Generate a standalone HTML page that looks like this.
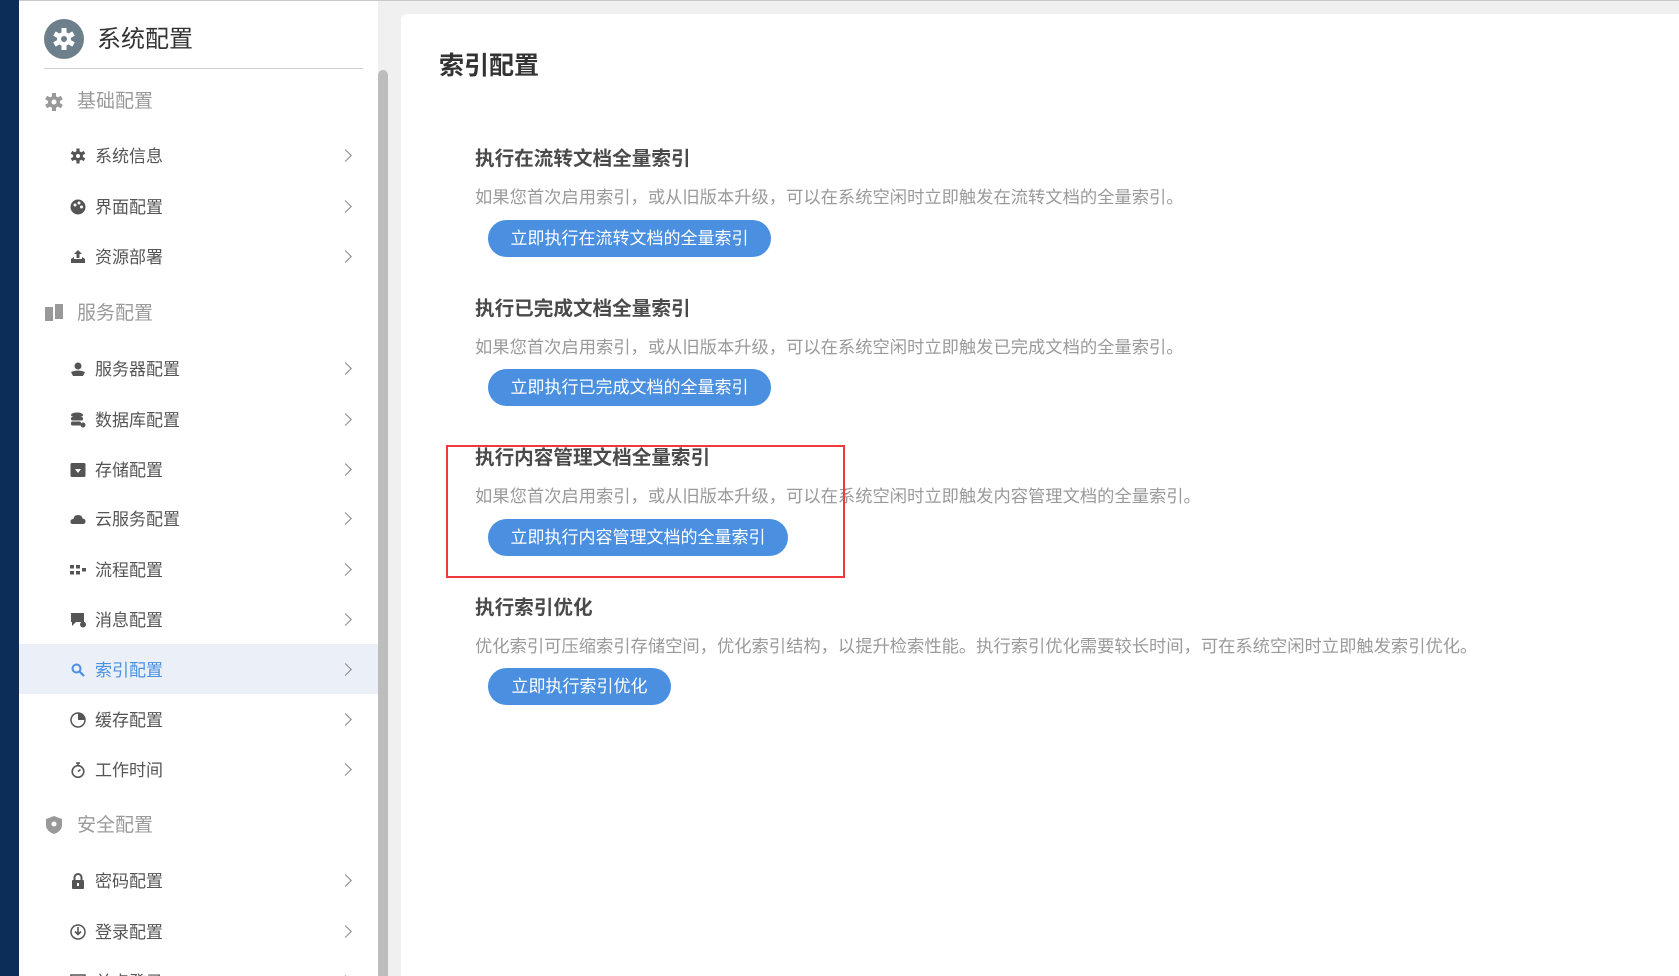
<!DOCTYPE html>
<html style="overflow:hidden;width:1679px;height:976px"><head><meta charset="utf-8"><style>
*{margin:0;padding:0;box-sizing:border-box}
body{width:1679px;height:976px;overflow:hidden;background:#f0f0f0;font-family:"Liberation Sans","Noto Sans CJK SC",sans-serif;position:relative}
.wrap{position:absolute;left:0;top:0;width:1679px;height:976px;overflow:hidden}
.topline{position:absolute;left:0;top:0;width:1679px;height:1px;background:#c8c8c8}
.dark{position:absolute;left:0;top:0;width:19px;height:976px;background:#0b2d57}
.side{position:absolute;left:19px;top:1px;width:359px;height:975px;background:#fff}
.scroll{position:absolute;left:378px;top:70px;width:10px;height:906px;background:#bdbdbd;border-radius:5px 5px 0 0}
.gear{position:absolute;left:44px;top:19px;width:40px;height:40px;border-radius:50%;background:#6e7f8c}
.htitle{position:absolute;left:97px;top:23px;font-size:24px;color:#333;line-height:34px}
.hline{position:absolute;left:44px;top:68px;width:319px;height:1px;background:#cfcfcf}
.grp{position:absolute;left:44px;height:30px;line-height:30px;font-size:19px;color:#9a9a9a}
.grp .t{position:absolute;left:33px;white-space:nowrap}
.it{position:absolute;left:19px;width:359px;height:50px;line-height:50px;font-size:17px;color:#555}
.it .t{position:absolute;left:76px;top:2px}
.it .ic{position:absolute;left:51px;top:18px;width:16px;height:16px}
.it .ch{position:absolute;left:322px;top:21px;width:9px;height:9px;border-right:1.5px solid #888;border-top:1.5px solid #888;transform:rotate(45deg)}
.it.on{background:#ebf0f8;color:#4a90e2}
.card{position:absolute;left:401px;top:14px;width:1278px;height:962px;background:#fff;border-radius:6px 0 0 0}
.title{position:absolute;left:439px;top:46px;font-size:25px;font-weight:bold;color:#333}
.h{position:absolute;left:475px;font-size:19.6px;font-weight:bold;color:#4a4a4a;white-space:nowrap}
.d{position:absolute;left:475px;font-size:17.3px;color:#9a9a9a;white-space:nowrap}
.b{position:absolute;left:488px;height:37px;line-height:37px;border-radius:19px;background:#4a8fe0;color:#fff;font-size:17px;text-align:center}
.red{position:absolute;left:446px;top:445px;width:399px;height:133px;border:2px solid #f03a3a}
</style></head><body><div class="wrap">
<div class="topline"></div>
<div class="dark"></div>
<div class="side"></div>
<div class="scroll"></div>
<div class="gear"><svg width="40" height="40" viewBox="0 0 40 40"><g fill="#fff" transform="translate(20 20)"><circle r="7"/><g><rect x="-2.5" y="-11" width="5" height="22"/><rect x="-2.5" y="-11" width="5" height="22" transform="rotate(60)"/><rect x="-2.5" y="-11" width="5" height="22" transform="rotate(120)"/></g><circle r="3" fill="#6e7f8c"/></g></svg></div>
<div class="htitle">系统配置</div>
<div class="hline"></div>

<div class="grp" style="top:87px"><svg width="20" height="20" viewBox="0 0 20 20" style="position:absolute;top:5px"><g fill="#999" transform="translate(10 10)"><circle r="6"/><rect x="-2" y="-9" width="4" height="18"/><rect x="-2" y="-9" width="4" height="18" transform="rotate(60)"/><rect x="-2" y="-9" width="4" height="18" transform="rotate(120)"/><circle r="2.5" fill="#fff"/></g></svg><span class="t">基础配置</span></div>
<div class="grp" style="top:299px"><svg width="20" height="20" viewBox="0 0 20 20" style="position:absolute;top:4px"><rect x="1" y="4" width="8" height="14" fill="#999"/><rect x="11" y="1" width="8" height="15" fill="#999"/></svg><span class="t">服务配置</span></div>
<div class="grp" style="top:811px"><svg width="20" height="20" viewBox="0 0 20 20" style="position:absolute;top:4px"><path d="M10 1 L18 4 V10 Q18 16 10 19 Q2 16 2 10 V4Z" fill="#999"/><circle cx="10" cy="9" r="2.5" fill="#fff"/></svg><span class="t">安全配置</span></div>

<div class="it" style="top:130px"><svg class="ic" viewBox="0 0 16 16"><g fill="#555" transform="translate(8 8)"><circle r="5"/><rect x="-1.6" y="-7.5" width="3.2" height="15"/><rect x="-1.6" y="-7.5" width="3.2" height="15" transform="rotate(60)"/><rect x="-1.6" y="-7.5" width="3.2" height="15" transform="rotate(120)"/><circle r="2" fill="#fff"/></g></svg><span class="t">系统信息</span><i class="ch"></i></div>
<div class="it" style="top:181px"><svg class="ic" viewBox="0 0 16 16"><circle cx="8" cy="8" r="7.5" fill="#555"/><circle cx="5" cy="6" r="1.5" fill="#fff"/><circle cx="9" cy="4" r="1.5" fill="#fff"/><circle cx="11.5" cy="8" r="1.5" fill="#fff"/></svg><span class="t">界面配置</span><i class="ch"></i></div>
<div class="it" style="top:231px"><svg class="ic" viewBox="0 0 16 16"><path d="M8 1 L12 5 H9.5 V9 H6.5 V5 H4Z M1 10 L4 8 V10 H12 V8 L15 10 V14 H1Z" fill="#555"/></svg><span class="t">资源部署</span><i class="ch"></i></div>
<div class="it" style="top:343px"><svg class="ic" viewBox="0 0 16 16"><circle cx="8" cy="5" r="3.5" fill="#555"/><path d="M1 11 Q8 8 15 11 L13 15 H3Z" fill="#555"/></svg><span class="t">服务器配置</span><i class="ch"></i></div>
<div class="it" style="top:394px"><svg class="ic" viewBox="0 0 16 16"><ellipse cx="7" cy="3" rx="6" ry="2.5" fill="#555"/><rect x="1" y="5" width="12" height="3.5" rx="1.5" fill="#555"/><rect x="1" y="9.5" width="10" height="4" rx="1.5" fill="#555"/><circle cx="13" cy="13" r="2.5" fill="#555"/></svg><span class="t">数据库配置</span><i class="ch"></i></div>
<div class="it" style="top:444px"><svg class="ic" viewBox="0 0 16 16"><rect x="0.5" y="1" width="15" height="14" rx="1.5" fill="#555"/><path d="M5 7 H11 L8 11Z" fill="#fff"/></svg><span class="t">存储配置</span><i class="ch"></i></div>
<div class="it" style="top:493px"><svg class="ic" viewBox="0 0 16 16"><path d="M3 13 Q0 13 0.5 10 Q1 8 3.5 8 Q4 4 8 4 Q12 4 12.5 7.5 Q16 8 15.5 11 Q15 13 13 13Z" fill="#555"/></svg><span class="t">云服务配置</span><i class="ch"></i></div>
<div class="it" style="top:544px"><svg class="ic" viewBox="0 0 16 16"><g fill="#555"><rect x="0" y="3" width="4" height="3.5"/><rect x="6" y="3" width="4" height="3.5"/><rect x="0" y="9" width="4" height="3.5"/><rect x="6" y="9" width="4" height="3.5"/><rect x="12" y="6" width="4" height="3.5"/></g></svg><span class="t">流程配置</span><i class="ch"></i></div>
<div class="it" style="top:594px"><svg class="ic" viewBox="0 0 16 16"><path d="M1 1 H14 V10 H6 L2 14 V10 H1Z" fill="#555"/><circle cx="13" cy="12.5" r="3" fill="#555"/></svg><span class="t">消息配置</span><i class="ch"></i></div>
<div class="it on" style="top:644px"><svg class="ic" viewBox="0 0 16 16"><circle cx="6.5" cy="6.5" r="4" fill="none" stroke="#4a90e2" stroke-width="2"/><path d="M9.5 9.5 L14 14" stroke="#4a90e2" stroke-width="2.2"/></svg><span class="t">索引配置</span><i class="ch"></i></div>
<div class="it" style="top:694px"><svg class="ic" viewBox="0 0 16 16"><circle cx="8" cy="8" r="7" fill="none" stroke="#555" stroke-width="1.5"/><path d="M8 1 V8 H15 A7 7 0 0 0 8 1Z" fill="#555"/></svg><span class="t">缓存配置</span><i class="ch"></i></div>
<div class="it" style="top:744px"><svg class="ic" viewBox="0 0 16 16"><circle cx="8" cy="9.5" r="5.8" fill="none" stroke="#555" stroke-width="1.6"/><path d="M6 1 H10 M8 1 V3.5 M8 9.5 L10.5 7.5" stroke="#555" stroke-width="1.6"/></svg><span class="t">工作时间</span><i class="ch"></i></div>
<div class="it" style="top:855px"><svg class="ic" viewBox="0 0 16 16"><path d="M4.5 7 V4.5 A3.5 3.5 0 0 1 11.5 4.5 V7" fill="none" stroke="#555" stroke-width="2"/><rect x="2" y="7" width="12" height="9" rx="1" fill="#555"/><rect x="7" y="10" width="2" height="3" fill="#fff"/></svg><span class="t">密码配置</span><i class="ch"></i></div>
<div class="it" style="top:906px"><svg class="ic" viewBox="0 0 16 16"><circle cx="8" cy="8" r="7" fill="none" stroke="#555" stroke-width="1.5"/><path d="M8 3 V10 M5 7.5 L8 10.5 L11 7.5" fill="none" stroke="#555" stroke-width="1.6"/></svg><span class="t">登录配置</span><i class="ch"></i></div>
<div class="it" style="top:956px"><svg class="ic" viewBox="0 0 16 16"><rect x="1" y="1" width="14" height="12" fill="none" stroke="#555" stroke-width="1.5"/></svg><span class="t">单点登录</span><i class="ch"></i></div>

<div class="card"></div>
<div class="title">索引配置</div>

<div class="h" style="top:142px">执行在流转文档全量索引</div>
<div class="d" style="top:183px">如果您首次启用索引，或从旧版本升级，可以在系统空闲时立即触发在流转文档的全量索引。</div>
<div class="b" style="top:220px;width:283px">立即执行在流转文档的全量索引</div>

<div class="h" style="top:292px">执行已完成文档全量索引</div>
<div class="d" style="top:333px">如果您首次启用索引，或从旧版本升级，可以在系统空闲时立即触发已完成文档的全量索引。</div>
<div class="b" style="top:369px;width:283px">立即执行已完成文档的全量索引</div>

<div class="h" style="top:441px">执行内容管理文档全量索引</div>
<div class="d" style="top:482px">如果您首次启用索引，或从旧版本升级，可以在系统空闲时立即触发内容管理文档的全量索引。</div>
<div class="b" style="top:519px;width:300px">立即执行内容管理文档的全量索引</div>

<div class="h" style="top:591px">执行索引优化</div>
<div class="d" style="top:632px">优化索引可压缩索引存储空间，优化索引结构，以提升检索性能。执行索引优化需要较长时间，可在系统空闲时立即触发索引优化。</div>
<div class="b" style="top:668px;width:183px">立即执行索引优化</div>

<div class="red"></div>
</div></body></html>
